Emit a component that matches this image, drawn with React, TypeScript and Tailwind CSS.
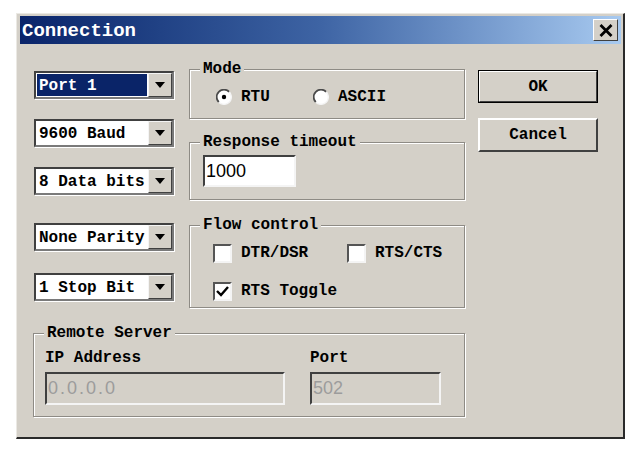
import React from 'react';

const mono = "font-['Liberation_Mono','DejaVu_Sans_Mono',monospace] font-bold";
const sans = "font-['Liberation_Sans',Arial,sans-serif]";

const Combo = ({ label, selected }: { label: string; selected?: boolean }) => (
  <div className="h-[28px] w-[140px] flex border-2 border-t-[#404040] border-l-[#404040] border-r-[#7a7a7a] border-b-[#7a7a7a] shadow-[1px_1px_0_#ffffff] bg-white">
    <div className="flex-1 flex items-center p-[1px]">
      <div
        className={`h-full w-full flex items-center pl-[2px] pt-[2px] text-[16px] ${mono} ${
          selected ? 'bg-[#0a2468] text-white' : 'text-black'
        }`}
      >
        {label}
      </div>
    </div>
    <div className="w-[24px] flex items-center justify-center bg-[#d4d0c8] border border-t-[#f4f4f4] border-l-[#f4f4f4] border-r-[#404040] border-b-[#404040]">
      <svg width="10" height="6" viewBox="0 0 10 6">
        <path d="M0 0 H10 L5 6 Z" fill="#000" />
      </svg>
    </div>
  </div>
);

const Group = ({
  title,
  className,
  children,
}: {
  title: string;
  className: string;
  children?: React.ReactNode;
}) => (
  <div
    className={`relative border border-[#8e8b85] shadow-[inset_1px_1px_0_#ffffff,1px_1px_0_#ffffff] ${className}`}
  >
    <span
      className={`absolute left-[10px] top-[-10px] px-[3px] bg-[#d4d0c8] text-[16px] leading-[18px] text-black ${mono}`}
    >
      {title}
    </span>
    {children}
  </div>
);

const Radio = ({ checked }: { checked?: boolean }) => (
  <svg width="16" height="16" viewBox="0 0 16 16">
    <circle cx="8" cy="8" r="7.3" fill="#ffffff" />
    <path d="M13.2 2.8 A7.3 7.3 0 0 0 2.8 13.2" stroke="#4a4a4a" strokeWidth="1.8" fill="none" />
    <path d="M2.8 13.2 A7.3 7.3 0 0 0 13.2 2.8" stroke="#f4f4f4" strokeWidth="1.4" fill="none" />
    {checked && <circle cx="8" cy="8" r="2.2" fill="#000" />}
  </svg>
);

const Check = ({ checked }: { checked?: boolean }) => (
  <div className="w-[19px] h-[19px] bg-white border-2 border-t-[#555] border-l-[#555] border-r-[#f4f4f4] border-b-[#f4f4f4] flex items-center justify-center">
    {checked && (
      <svg width="13" height="11" viewBox="0 0 13 11">
        <path d="M1 5 L5 9 L12 1" stroke="#000" strokeWidth="2.4" fill="none" />
      </svg>
    )}
  </div>
);

const Field = ({
  value,
  className,
  disabled,
}: {
  value: string;
  className: string;
  disabled?: boolean;
}) => (
  <div
    className={`flex items-center border-2 border-t-[#404040] border-l-[#404040] border-r-[#f4f4f4] border-b-[#f4f4f4] text-[18px] ${sans} ${
      disabled ? 'bg-[#d4d0c8] text-[#9c9c9c]' : 'bg-white text-black'
    } ${className}`}
  >
    {value}
  </div>
);

export default function App() {
  return (
    <div className="w-[640px] h-[453px] bg-white pt-[13px] pl-[16px]">
      <div className="w-[609px] h-[426px] bg-[#d4d0c8] border-l border-t border-l-[#ebe9e4] border-t-[#ebe9e4] border-r-2 border-b-2 border-r-[#2a2a2a] border-b-[#2a2a2a] pl-[3px] pr-[2px] pt-[2px] flex flex-col">
        {/* Title bar */}
        <div className="h-[28px] flex items-center justify-between bg-gradient-to-r from-[#0a246a] via-[#3e64a4] to-[#a8caf0]">
          <span className={`pl-[2px] pt-[2px] text-[19px] text-white ${mono}`}>Connection</span>
          <div className="w-[25px] h-[22px] mr-[3px] flex items-center justify-center bg-[#d4d0c8] border border-t-[#ffffff] border-l-[#ffffff] border-r-[#404040] border-b-[#404040]">
            <svg width="14" height="13" viewBox="0 0 14 13">
              <path d="M1.5 1 L12.5 12 M12.5 1 L1.5 12" stroke="#000" strokeWidth="2.8" />
            </svg>
          </div>
        </div>

        {/* Body */}
        <div className="flex">
          <div className="ml-[14px] mt-[27px] flex flex-col">
            <Combo label="Port 1" selected />
            <div className="mt-[20px]">
              <Combo label="9600 Baud" />
            </div>
            <div className="mt-[20px]">
              <Combo label="8 Data bits" />
            </div>
            <div className="mt-[28px]">
              <Combo label="None Parity" />
            </div>
            <div className="mt-[22px]">
              <Combo label="1 Stop Bit" />
            </div>
          </div>

          <div className="ml-[15px] mt-[25px] w-[276px] flex flex-col">
            <Group title="Mode" className="h-[50px] pl-[26px] pt-[15px]">
              <div className={`flex items-center text-[16px] text-black ${mono}`}>
                <div className="w-[97px] flex items-center gap-[9px]">
                  <Radio checked />
                  <span>RTU</span>
                </div>
                <div className="flex items-center gap-[9px]">
                  <Radio />
                  <span>ASCII</span>
                </div>
              </div>
            </Group>
            <Group title="Response timeout" className="mt-[23px] h-[58px] pl-[13px] pt-[12px]">
              <Field value="1000" className="w-[93px] h-[32px] pl-[1px]" />
            </Group>
            <Group title="Flow control" className="mt-[25px] h-[83px] pl-[23px] pt-[15px]">
              <div className={`flex flex-col gap-[14px] text-[16px] text-black ${mono}`}>
                <div className="flex items-center">
                  <div className="w-[134px] flex items-center gap-[9px]">
                    <Check />
                    <span>DTR/DSR</span>
                  </div>
                  <div className="flex items-center gap-[9px]">
                    <Check />
                    <span>RTS/CTS</span>
                  </div>
                </div>
                <div className="flex items-center gap-[9px]">
                  <Check checked />
                  <span>RTS Toggle</span>
                </div>
              </div>
            </Group>
          </div>

          <div className={`ml-[13px] mt-[26px] w-[120px] flex flex-col text-[16px] text-black ${mono}`}>
            <div className="h-[33px] border border-black">
              <div className="h-full flex items-center justify-center border border-t-[#ffffff] border-l-[#ffffff] border-r-[#404040] border-b-[#404040]">
                OK
              </div>
            </div>
            <div className="mt-[15px] h-[34px] flex items-center justify-center border-2 border-t-[#ffffff] border-l-[#ffffff] border-r-[#404040] border-b-[#404040]">
              Cancel
            </div>
          </div>
        </div>

        <Group title="Remote Server" className="ml-[13px] mt-[25px] w-[432px] h-[84px] pl-[11px] pt-[15px]">
          <div className="flex">
            <div className="flex flex-col">
              <span className={`h-[18px] leading-[18px] text-[16px] text-black ${mono}`}>IP Address</span>
              <Field value="0.0.0.0" disabled className="mt-[5px] w-[240px] h-[33px] pl-[1px] tracking-[2px]" />
            </div>
            <div className="ml-[25px] flex flex-col">
              <span className={`h-[18px] leading-[18px] text-[16px] text-black ${mono}`}>Port</span>
              <Field value="502" disabled className="mt-[5px] w-[131px] h-[33px] pl-[1px]" />
            </div>
          </div>
        </Group>
      </div>
    </div>
  );
}
